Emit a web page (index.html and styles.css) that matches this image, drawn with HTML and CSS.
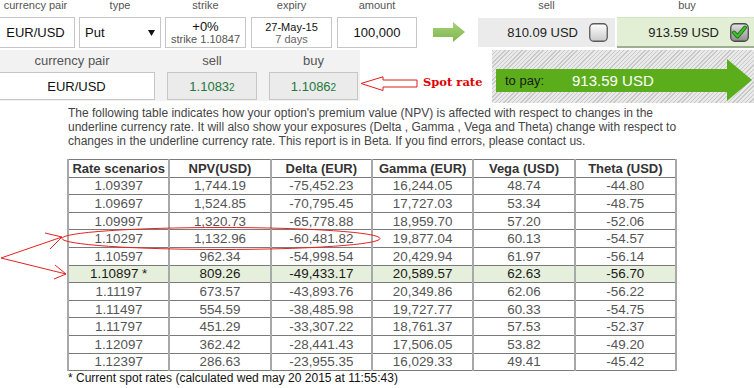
FILE: index.html
```html
<!DOCTYPE html>
<html>
<head>
<meta charset="utf-8">
<link rel="stylesheet" href="styles.css">
</head>
<body>
<div class="page">
  <div class="row1">
    <div class="field f-cp"><div class="lbl">currency pair</div><div class="box">EUR/USD</div></div>
    <div class="field f-type"><div class="lbl">type</div><div class="box select"><span>Put</span><svg class="caret" width="7" height="6" viewBox="0 0 7 6"><polygon points="0,0 7,0 3.5,6" fill="#111"/></svg></div></div>
    <div class="field f-strike"><div class="lbl">strike</div><div class="box two"><span class="s1">+0%</span><span class="s2">strike 1.10847</span></div></div>
    <div class="field f-exp"><div class="lbl">expiry</div><div class="box two"><span class="e1">27-May-15</span><span class="e2">7 days</span></div></div>
    <div class="field f-amt"><div class="lbl">amount</div><div class="box">100,000</div></div>
    <svg class="go" width="32" height="20" viewBox="0 0 32 20">
      <defs><linearGradient id="gg" x1="0" y1="0" x2="0" y2="1"><stop offset="0" stop-color="#a6d27a"/><stop offset="1" stop-color="#7fb64c"/></linearGradient></defs>
      <polygon points="0,6 20,6 20,0 32,10 20,20 20,15 0,15" fill="url(#gg)"/>
    </svg>
    <div class="field f-sell"><div class="lbl">sell</div><div class="box price sell"><span>810.09 USD</span>
      <svg class="cb" width="19" height="19" viewBox="0 0 19 19">
        <defs><linearGradient id="cw" x1="0" y1="0" x2="0" y2="1"><stop offset="0" stop-color="#ffffff"/><stop offset="1" stop-color="#c9c9c9"/></linearGradient></defs>
        <rect x="0.75" y="0.75" width="17.5" height="17.5" rx="4" fill="url(#cw)" stroke="#5a5a5a" stroke-width="1.3"/>
      </svg></div></div>
    <div class="field f-buy"><div class="lbl">buy</div><div class="box price buy"><span>913.59 USD</span>
      <svg class="cb" width="19" height="19" viewBox="0 0 19 19">
        <defs><linearGradient id="cg" x1="0" y1="0" x2="0" y2="1"><stop offset="0" stop-color="#e4e4e4"/><stop offset="1" stop-color="#8c8c8c"/></linearGradient></defs>
        <rect x="0.75" y="0.75" width="17.5" height="17.5" rx="4" fill="url(#cg)" stroke="#4a4a4a" stroke-width="1.3"/>
        <path d="M4,9.5 L7.5,13.5 L15,4.5" fill="none" stroke="#1f6d12" stroke-width="4" stroke-linecap="round" stroke-linejoin="round"/>
        <path d="M4,9.5 L7.5,13.5 L15,4.5" fill="none" stroke="#3fc12c" stroke-width="2.2" stroke-linecap="round" stroke-linejoin="round"/>
      </svg></div></div>
  </div>

  <div class="row2">
    <div class="spot-panel">
      <div class="field f-cp2"><div class="lbl2">currency pair</div><div class="box2">EUR/USD</div></div>
      <div class="field f-s2"><div class="lbl2">sell</div><div class="box2 rate">1.1083<small>2</small></div></div>
      <div class="field f-b2"><div class="lbl2">buy</div><div class="box2 rate">1.1086<small>2</small></div></div>
    </div>
    <div class="spot-note">
      <svg class="spot-arrow" width="60" height="16" viewBox="0 0 60 16">
        <polygon points="1,7.5 23,0.8 23,4 57,4 57,11 23,11 23,14.5" fill="#fff" stroke="#e21b1b" stroke-width="1"/>
      </svg>
      <span class="spot-text">Spot rate</span>
    </div>
    <div class="pay-panel">
      <div class="pay-arrow"><span class="pay-lbl">to pay:</span><span class="pay-amt">913.59 USD</span></div>
    </div>
  </div>

  <p class="note">The following table indicates how your option's premium value (NPV) is affected with respect to changes in the underline currency rate. It will also show your exposures (Delta , Gamma , Vega and Theta) change with respect to changes in the underline currency rate. This report is in Beta. If you find errors, please contact us.</p>

  <table class="grid">
    <thead>
      <tr><th>Rate scenarios</th><th>NPV(USD)</th><th>Delta (EUR)</th><th>Gamma (EUR)</th><th>Vega (USD)</th><th>Theta (USD)</th></tr>
    </thead>
    <tbody>
      <tr><td>1.09397</td><td>1,744.19</td><td>-75,452.23</td><td>16,244.05</td><td>48.74</td><td>-44.80</td></tr>
      <tr><td>1.09697</td><td>1,524.85</td><td>-70,795.45</td><td>17,727.03</td><td>53.34</td><td>-48.75</td></tr>
      <tr><td>1.09997</td><td>1,320.73</td><td>-65,778.88</td><td>18,959.70</td><td>57.20</td><td>-52.06</td></tr>
      <tr><td>1.10297</td><td>1,132.96</td><td>-60,481.82</td><td>19,877.04</td><td>60.13</td><td>-54.57</td></tr>
      <tr><td>1.10597</td><td>962.34</td><td>-54,998.54</td><td>20,429.94</td><td>61.97</td><td>-56.14</td></tr>
      <tr class="current"><td>1.10897 *</td><td>809.26</td><td>-49,433.17</td><td>20,589.57</td><td>62.63</td><td>-56.70</td></tr>
      <tr><td>1.11197</td><td>673.57</td><td>-43,893.76</td><td>20,349.86</td><td>62.06</td><td>-56.22</td></tr>
      <tr><td>1.11497</td><td>554.59</td><td>-38,485.98</td><td>19,727.77</td><td>60.33</td><td>-54.75</td></tr>
      <tr><td>1.11797</td><td>451.29</td><td>-33,307.22</td><td>18,761.37</td><td>57.53</td><td>-52.37</td></tr>
      <tr><td>1.12097</td><td>362.42</td><td>-28,441.43</td><td>17,506.05</td><td>53.82</td><td>-49.20</td></tr>
      <tr><td>1.12397</td><td>286.63</td><td>-23,955.35</td><td>16,029.33</td><td>49.41</td><td>-45.42</td></tr>
    </tbody>
  </table>
  <p class="foot">* Current spot rates (calculated wed may 20 2015 at 11:55:43)</p>

  <svg class="marks" width="754" height="388" viewBox="0 0 754 388">
    <g fill="none" stroke="#e52222" stroke-width="1">
      <ellipse cx="221" cy="238.5" rx="159" ry="11"/>
      <polyline points="62,237 1,258 66,274"/>
      <polyline points="45,233 62,237 50,249"/>
      <polyline points="55,265 66,274 54,279"/>
    </g>
  </svg>
</div>
</body>
</html>
```
FILE: styles.css
```css
* { box-sizing: border-box; }

body {
  margin: 0;
  font-family: "Liberation Sans", Arial, sans-serif;
  color: #222;
  background: #fff;
}

.page {
  position: relative;
  width: 754px;
  height: 388px;
  overflow: hidden;
}

/* ---------- first row ---------- */
.row1 {
  display: flex;
  align-items: flex-start;
  height: 48px;
  margin-left: -4px;
}

.field {
  display: flex;
  flex-direction: column;
  flex: none;
}

.lbl {
  height: 17px;
  font-size: 11px;
  line-height: 11px;
  color: #555;
  text-align: center;
  white-space: nowrap;
}

.box {
  height: 31px;
  border: 1px solid #c6c6c6;
  background: #fff;
  display: flex;
  align-items: center;
  justify-content: center;
  font-size: 13px;
  color: #111;
}

.f-cp { width: 79px; }
.f-type { width: 82px; margin-left: 4px; }
.f-strike { width: 81px; margin-left: 4px; }
.f-exp { width: 81px; margin-left: 5px; }
.f-amt { width: 80px; margin-left: 5px; }
.f-sell { width: 137px; margin-left: 13px; }
.f-buy { width: 140px; margin-left: 2px; }

.select {
  justify-content: space-between;
  padding: 0 5px 0 5px;
}
.caret { margin-top: 1px; }

.two {
  flex-direction: column;
}
.s1 { font-size: 13px; line-height: 13px; color: #111; }
.s2 { font-size: 11px; line-height: 12px; color: #555; }
.e1 { font-size: 11px; line-height: 12px; color: #111; }
.e2 { font-size: 11px; line-height: 12px; color: #666; }

.go {
  flex: none;
  margin: 22px 0 0 16px;
}

.price {
  justify-content: flex-end;
  border: none;
  font-size: 13px;
  color: #222;
}
.sell {
  background: #ebebeb;
  height: 29px;
  margin-top: 1px;
  padding-right: 7px;
  gap: 11px;
}
.buy {
  background: #e2efd5;
  border-top: 1px solid #d2e4c2;
  border-bottom: 2px solid #9eae92;
  padding-right: 8px;
  gap: 11px;
}
.cb { flex: none; }

/* ---------- second row ---------- */
.row2 {
  display: flex;
  margin-top: 2px;
  height: 53px;
}

.spot-panel {
  flex: none;
  width: 360px;
  height: 51px;
  background: #f2f2f2;
  display: flex;
  padding-top: 4px;
}

.lbl2 {
  height: 18px;
  font-size: 13px;
  line-height: 14px;
  color: #555;
  text-align: center;
  white-space: nowrap;
}

.box2 {
  height: 28px;
  border: 1px solid #c6c6c6;
  background: #fff;
  display: flex;
  align-items: center;
  justify-content: center;
  font-size: 13px;
  color: #111;
}

.f-cp2 { width: 157px; margin-left: -2px; }
.f-cp2 .lbl2 { padding-right: 9px; }
.f-s2 { width: 90px; margin-left: 12px; }
.f-b2 { width: 89px; margin-left: 12px; }

.rate {
  background: #ebebeb;
  color: #23783a;
  align-items: baseline;
  padding-top: 6px;
}
.rate small { font-size: 10px; }

.spot-note {
  flex: none;
  width: 132px;
  display: flex;
  align-items: flex-start;
  padding-top: 26px;
}
.spot-arrow { flex: none; }
.spot-text {
  margin-left: 3px;
  margin-top: -1px;
  font-family: "DejaVu Serif", serif;
  font-weight: bold;
  font-size: 11.5px;
  line-height: 14px;
  color: #e00000;
  white-space: nowrap;
}

.pay-panel {
  flex: none;
  width: 262px;
  height: 53px;
  background: repeating-linear-gradient(135deg, #c8c8c8 0 1px, #e9e9e9 1px 3px);
  padding: 19px 0 0 4px;
}

.pay-arrow {
  position: relative;
  width: 231px;
  height: 23px;
  background: #5cad1c;
  display: flex;
  align-items: center;
  padding-left: 9px;
}
.pay-arrow::after {
  content: "";
  position: absolute;
  left: 100%;
  top: -10px;
  border-left: 25px solid #5cad1c;
  border-top: 21.5px solid transparent;
  border-bottom: 21.5px solid transparent;
}
.pay-lbl {
  width: 67px;
  font-size: 13px;
  color: #1a1a1a;
}
.pay-amt {
  font-size: 15px;
  color: #fff;
}

/* ---------- text + table ---------- */
.note {
  margin: 3px 0 0 68px;
  width: 612px;
  font-size: 12px;
  line-height: 14px;
  color: #444;
}

.grid {
  margin: 11px 0 0 67px;
  width: 610px;
  border-collapse: collapse;
  table-layout: fixed;
}

.grid th,
.grid td {
  height: 17.6px;
  padding: 0;
  text-align: center;
  vertical-align: middle;
  border-top: 1px solid #7a7a7a;
  border-bottom: 1px solid #7a7a7a;
  border-left: 2px solid #a8a8a8;
  border-right: 2px solid #a8a8a8;
  white-space: nowrap;
}

.grid th {
  font-size: 13px;
  font-weight: bold;
  color: #333;
  line-height: 15px;
}

.grid td {
  font-size: 13.4px;
  line-height: 15px;
  color: #555;
}

.grid .current td {
  background: #e5efdb;
  color: #1a1a1a;
}

.foot {
  margin: 0 0 0 68px;
  font-size: 12px;
  line-height: 14px;
  color: #111;
}

.marks {
  position: absolute;
  left: 0;
  top: 0;
  pointer-events: none;
}
```
